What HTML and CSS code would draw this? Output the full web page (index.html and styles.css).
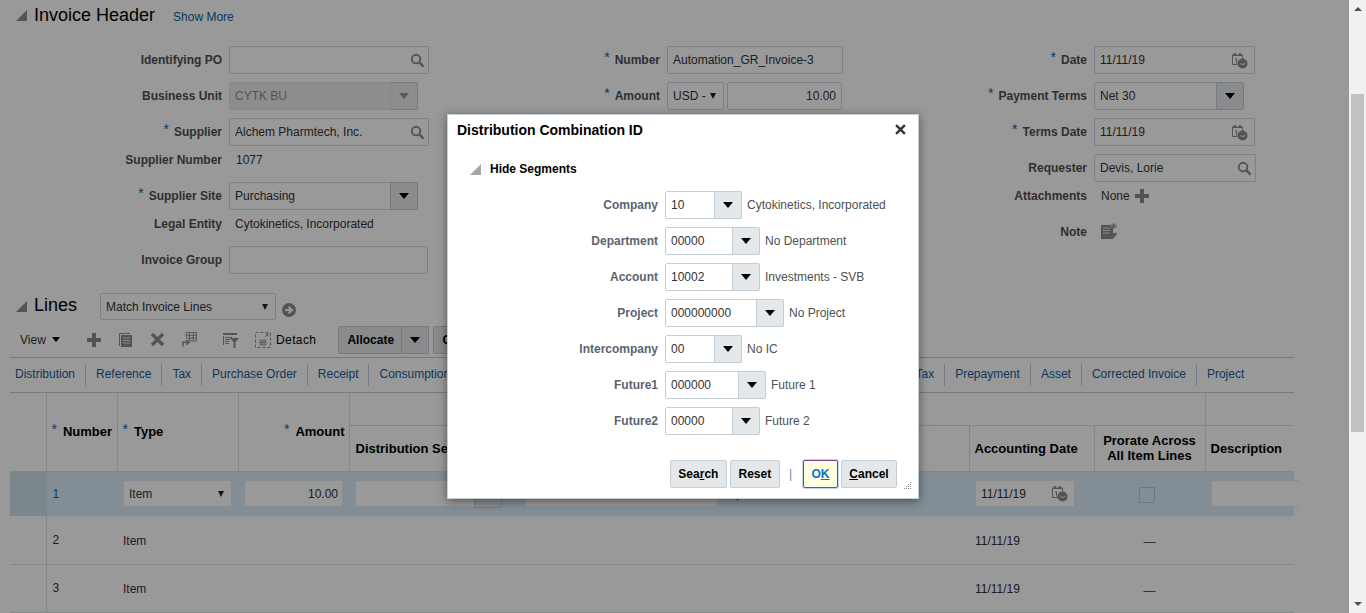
FILE: index.html
```html
<!DOCTYPE html>
<html lang="en">
<head>
    <meta charset="UTF-8">
    <title>Invoice Header</title>
    <link rel="stylesheet" href="styles.css">
</head>
<body>
    <svg class="defs" width="0" height="0">
        <symbol id="i-search" viewBox="0 0 16 16"><circle cx="6.5" cy="6.5" r="4.6" fill="none" stroke="currentColor" stroke-width="2"/><path d="M10 10l4.5 4.5" stroke="currentColor" stroke-width="2.6"/></symbol>
        <symbol id="i-cal" viewBox="0 0 17 17"><path d="M1.5 3.5h10v3M1.5 3.5v9h5" fill="none" stroke="currentColor" stroke-width="1"/><path d="M3 1h2v3H3zM8 1h2v3H8zM1 2.5h11V4H1zM4 6.500h2v5H5V7.500H4z" fill="currentColor"/><circle cx="11.500" cy="11.500" r="5" fill="currentColor"/><path d="M9.500 11.500l2 1 2.500-.8" fill="none" stroke="#fff" stroke-width="1"/></symbol>
        <symbol id="i-plus" viewBox="0 0 14 14"><path d="M5 0h4v5h5v4H9v5H5V9H0V5h5z" fill="currentColor"/></symbol>
    </svg>

    <main class="page">
        <div class="section-head">
            <span class="twisty"></span>
            <h2>Invoice Header</h2>
            <a class="link show-more">Show More</a>
        </div>

        <div class="form">
            <div class="col col-a">
                <div class="field"><span class="lbl">Identifying PO</span><div class="ctl w-200"><span></span><svg class="ico-search"><use href="#i-search"/></svg></div></div>
                <div class="field"><span class="lbl">Business Unit</span><div class="ctl w-189 disabled"><span>CYTK BU</span><b class="drop"><i class="arrow"></i></b></div></div>
                <div class="field"><span class="lbl"><em>*</em>Supplier</span><div class="ctl w-200"><span>Alchem Pharmtech, Inc.</span><svg class="ico-search"><use href="#i-search"/></svg></div></div>
                <div class="field text"><span class="lbl">Supplier Number</span><span class="val ind">1077</span></div>
                <div class="field"><span class="lbl"><em>*</em>Supplier Site</span><div class="ctl w-189"><span>Purchasing</span><b class="drop"><i class="arrow"></i></b></div></div>
                <div class="field text"><span class="lbl">Legal Entity</span><span class="val">Cytokinetics, Incorporated</span></div>
                <div class="field"><span class="lbl">Invoice Group</span><div class="ctl w-199"></div></div>
            </div>
            <div class="col col-b">
                <div class="field"><span class="lbl"><em>*</em>Number</span><div class="ctl w-176"><span>Automation_GR_Invoice-3</span></div></div>
                <div class="field"><span class="lbl"><em>*</em>Amount</span><div class="ctl w-57"><span>USD -</span><i class="arrow small"></i></div><div class="ctl w-115 right"><span>10.00</span></div></div>
            </div>
            <div class="col col-c">
                <div class="field"><span class="lbl"><em>*</em>Date</span><div class="ctl w-161"><span>11/11/19</span><svg class="ico-cal"><use href="#i-cal"/></svg></div></div>
                <div class="field"><span class="lbl"><em>*</em>Payment Terms</span><div class="ctl w-150"><span>Net 30</span><b class="drop"><i class="arrow"></i></b></div></div>
                <div class="field"><span class="lbl"><em>*</em>Terms Date</span><div class="ctl w-161"><span>11/11/19</span><svg class="ico-cal"><use href="#i-cal"/></svg></div></div>
                <div class="field"><span class="lbl">Requester</span><div class="ctl w-162"><span>Devis, Lorie</span><svg class="ico-search"><use href="#i-search"/></svg></div></div>
                <div class="field text"><span class="lbl">Attachments</span><span class="val ind">None</span><svg class="ico-add"><use href="#i-plus"/></svg></div>
                <div class="field note"><span class="lbl">Note</span>
                    <svg class="ico-note" viewBox="0 0 16 16"><path d="M0 2h10v3h2v5h4v1l-4 5H0z" fill="currentColor"/><path d="M2 5h7M2 7.500h7M2 10h7" stroke="#e4e4e4" stroke-width="1"/><path d="M12.500 0v6M10 3h6M10.500 1l4 4M14.500 1l-4 4" stroke="currentColor" stroke-width="1"/></svg>
                </div>
            </div>
        </div>

        <div class="lines-head">
            <span class="twisty"></span>
            <h2>Lines</h2>
            <div class="ctl match"><span>Match Invoice Lines</span><i class="arrow small"></i></div>
            <svg class="ico-go" viewBox="0 0 14 14"><circle cx="7" cy="7" r="7" fill="currentColor"/><path d="M3 7h6M6.500 3.800L10 7l-3.500 3.200" fill="none" stroke="#fff" stroke-width="2"/></svg>
        </div>

        <div class="toolbar">
            <span class="view">View</span><i class="arrow view-arrow"></i>
            <svg class="tool t-add"><use href="#i-plus"/></svg>
            <svg class="tool" viewBox="0 0 15 15"><path d="M1 1h11v1H2v12H1z" fill="currentColor"/><path d="M3 3h11v12H3z" fill="currentColor"/><path d="M5 6h7M5 8.500h7M5 11h7" stroke="#e4e4e4" stroke-width="1"/></svg>
            <svg class="tool" viewBox="0 0 15 15"><path d="M2 2l11 11M13 2L2 13" stroke="currentColor" stroke-width="3.400"/></svg>
            <svg class="tool" viewBox="0 0 16 16"><path d="M4.500 .500h11v9h-7M4.500 .500v5M4.500 3.500h11M4.500 6.500h11M8 .500v9M12 .500v9" fill="none" stroke="currentColor" stroke-width="1"/><path d="M1 15.500v-4.500h6M4.500 8.500L7.500 11l-3 2.500" fill="none" stroke="currentColor" stroke-width="1.600"/></svg>
            <svg class="tool t-filter" viewBox="0 0 16 16"><path d="M0 1h14v2H0zM0 4h1v9H0zM2 5h7v1H2zM2 7h5v1H2zM2 9h4v1H2zM2 11h4v1H2z" fill="currentColor"/><path d="M7 6h9l-3.500 4v6h-2v-6z" fill="currentColor"/></svg>
            <svg class="tool t-detach" viewBox="0 0 16 16"><rect x=".500" y=".500" width="15" height="15" fill="none" stroke="currentColor" stroke-dasharray="3 2"/><path d="M5 8h6v5H5zM5 10.500h6M7 8v5M9 8v5" fill="none" stroke="currentColor" stroke-width=".8"/><path d="M10 5l3-3M10.500 2H13v2.500" fill="none" stroke="currentColor"/></svg>
            <span class="detach">Detach</span>
            <div class="split"><span>Allocate</span><b><i class="arrow"></i></b></div>
            <div class="split next"><span>C</span></div>
        </div>

        <nav class="tabs">
            <a class="link">Distribution</a>
            <a class="link">Reference</a>
            <a class="link">Tax</a>
            <a class="link">Purchase Order</a>
            <a class="link">Receipt</a>
            <a class="link tab-wide">Consumption</a>
            <a class="link">Tax</a>
            <a class="link">Prepayment</a>
            <a class="link">Asset</a>
            <a class="link">Corrected Invoice</a>
            <a class="link">Project</a>
        </nav>

        <table class="grid">
            <colgroup>
                <col class="c-head"><col class="c-num"><col class="c-type"><col class="c-amt"><col class="c-set"><col class="c-combo"><col class="c-date"><col class="c-pro"><col class="c-desc">
            </colgroup>
            <thead>
                <tr class="top">
                    <th rowspan="2"></th>
                    <th rowspan="2"><em>*</em>Number</th>
                    <th rowspan="2"><em>*</em>Type</th>
                    <th rowspan="2" class="num"><em>*</em>Amount</th>
                    <th colspan="4"></th>
                    <th></th>
                </tr>
                <tr class="bottom">
                    <th>Distribution Set</th>
                    <th></th>
                    <th>Accounting Date</th>
                    <th class="mid">Prorate Across<br>All Item Lines</th>
                    <th>Description</th>
                </tr>
            </thead>
            <tbody>
                <tr class="sel">
                    <td></td>
                    <td class="no">1</td>
                    <td><div class="ctl cell w-109"><span>Item</span><i class="arrow small"></i></div></td>
                    <td><div class="ctl cell w-99 right"><span>10.00</span></div></td>
                    <td><div class="ctl cell w-147"><b class="drop"></b></div></td>
                    <td><div class="combo"><div class="ctl cell w-193"></div><svg class="ico-search"><use href="#i-search"/></svg></div></td>
                    <td><div class="ctl cell w-100"><span>11/11/19</span><svg class="ico-cal"><use href="#i-cal"/></svg></div></td>
                    <td class="mid"><span class="check"></span></td>
                    <td><div class="ctl cell w-fill"></div></td>
                </tr>
                <tr>
                    <td></td><td class="no">2</td><td>Item</td><td></td><td></td><td></td><td>11/11/19</td><td class="mid dash">&mdash;</td><td></td>
                </tr>
                <tr>
                    <td></td><td class="no">3</td><td>Item</td><td></td><td></td><td></td><td>11/11/19</td><td class="mid dash">&mdash;</td><td></td>
                </tr>
            </tbody>
        </table>

        <div class="overlay"></div>

        <div class="dialog">
            <div class="dialog-head">
                <h3>Distribution Combination ID</h3>
                <svg class="close" viewBox="0 0 10 10"><path d="M1 1l8 8M9 1l-8 8" stroke="currentColor" stroke-width="2.200"/></svg>
            </div>
            <div class="segments"><span class="twisty small"></span><strong>Hide Segments</strong></div>
            <div class="seg-list">
                <div class="seg"><label>Company</label><div class="ctl w-77"><span>10</span><b class="drop"><i class="arrow"></i></b></div><span class="val">Cytokinetics, Incorporated</span></div>
                <div class="seg"><label>Department</label><div class="ctl w-95"><span>00000</span><b class="drop"><i class="arrow"></i></b></div><span class="val">No Department</span></div>
                <div class="seg"><label>Account</label><div class="ctl w-95"><span>10002</span><b class="drop"><i class="arrow"></i></b></div><span class="val">Investments - SVB</span></div>
                <div class="seg"><label>Project</label><div class="ctl w-119"><span>000000000</span><b class="drop"><i class="arrow"></i></b></div><span class="val">No Project</span></div>
                <div class="seg"><label>Intercompany</label><div class="ctl w-77"><span>00</span><b class="drop"><i class="arrow"></i></b></div><span class="val">No IC</span></div>
                <div class="seg"><label>Future1</label><div class="ctl w-101"><span>000000</span><b class="drop"><i class="arrow"></i></b></div><span class="val">Future 1</span></div>
                <div class="seg"><label>Future2</label><div class="ctl w-95"><span>00000</span><b class="drop"><i class="arrow"></i></b></div><span class="val">Future 2</span></div>
            </div>
            <div class="dialog-foot">
                <button class="btn b-search">Sea<u>r</u>ch</button>
                <button class="btn b-reset">Reset</button>
                <span class="pipe">|</span>
                <button class="btn b-ok">O<u>K</u></button>
                <button class="btn b-cancel"><u>C</u>ancel</button>
            </div>
            <svg class="grip" viewBox="0 0 9 9"><path d="M7 0h1v1H7zM5 2h1v1H5zM7 2h1v1H7zM3 4h1v1H3zM5 4h1v1H5zM7 4h1v1H7zM1 6h1v1H1zM3 6h1v1H3zM5 6h1v1H5zM7 6h1v1H7z" fill="#8a8a8a"/></svg>
        </div>
    </main>

    <aside class="scrollbar">
        <i class="sb-up"></i>
        <div class="sb-track"><div class="sb-thumb"></div></div>
        <i class="sb-down"></i>
    </aside>
</body>
</html>
```

FILE: styles.css
```css
* { box-sizing: border-box; }
html, body { margin: 0; height: 613px; overflow: hidden; }
body { display: flex; font-family: "Liberation Sans", Arial, sans-serif; font-size: 12px; color: #333; background: #fff; }
.defs { position: absolute; }
.page { position: relative; width: 1349px; height: 613px; overflow: hidden; flex: none; }

h2 { margin: 0; font-size: 18px; font-weight: normal; color: #000; }
.link { color: #145c9e; }
em { font-style: normal; color: #145c9e; font-size: 14px; line-height: 0; font-weight: normal; vertical-align: 2px; margin-right: 6px; }

.twisty { width: 0; height: 0; border-style: solid; border-width: 0 0 11px 11px; border-color: transparent transparent #8c8c8c transparent; flex: none; }
.twisty.small { border-color: transparent transparent #a6a6a6 transparent; }

.section-head { display: flex; align-items: center; height: 30px; padding-left: 16px; }
.section-head h2 { margin-left: 7px; }
.show-more { margin: 3px 0 0 18px; }

/* header form */
.form { display: flex; margin-top: 16px; height: 228px; }
.col { flex: none; }
.col-a { width: 440px; --lbl: 222px; }
.col-b { width: 440px; --lbl: 220px; }
.col-c { width: 469px; --lbl: 207px; }
.field { display: flex; align-items: center; height: 28px; margin-bottom: 8px; }
.field.text { height: 20px; margin: -4px 0 12px; }
.lbl { width: var(--lbl); margin-right: 7px; text-align: right; font-weight: bold; color: #4f4f4f; flex: none; white-space: nowrap; }
.lbl em { margin-right: 5px; }
.val { padding-left: 6px; color: #333; white-space: nowrap; }
.val.ind { padding-left: 7px; }

.ctl { position: relative; display: flex; align-items: center; height: 28px; padding-left: 5px; background: #fff; border: 1px solid #c4ced7; border-radius: 2px; flex: none; color: #333; }
.form .ctl, .match { border-color: #d0d8de; }
.ctl > span { flex: 1; white-space: nowrap; }
.ctl.right { padding-right: 5px; text-align: right; }
.ctl.disabled { background: #ececec; color: #8a8a8a; border-color: #e0e0e0; }
.ctl.disabled .drop { background: #ececec; border-left-color: #dcdcdc; }
.ctl.disabled .arrow { border-top-color: #999; }
.drop { display: flex; align-items: center; justify-content: center; width: 28px; height: 28px; margin: -1px -1px -1px 0; background: #e4e8ea; border: 1px solid #c4ced7; border-radius: 0 2px 2px 0; flex: none; }
.arrow { display: block; width: 0; height: 0; border-style: solid; border-width: 6px 5px 0 5px; border-color: #000 transparent transparent transparent; flex: none; }
.arrow.small { border-width: 6px 3.500px 0 3.500px; margin-right: 7px; border-top-color: #222; }

.w-57 { width: 57px; margin-right: 3px; }
.w-115 { width: 115px; }
.w-150 { width: 150px; }
.w-161 { width: 161px; }
.w-162 { width: 162px; }
.w-176 { width: 176px; }
.w-189 { width: 189px; }
.w-199 { width: 199px; }
.w-200 { width: 200px; }
.w-77 { width: 77px; }
.w-95 { width: 95px; }
.w-101 { width: 101px; }
.w-119 { width: 119px; }
.w-109 { width: 109px; }
.w-99 { width: 99px; }
.w-147 { width: 147px; }
.w-193 { width: 193px; }
.w-100 { width: 100px; }
.w-fill { width: 89px; border-right: 0; }

.ico-search { width: 15px; height: 15px; margin-right: 3px; color: #8c8c8c; flex: none; }
.ico-cal { width: 17px; height: 17px; margin-right: 6px; color: #8c8c8c; flex: none; }
.ico-add { width: 14px; height: 14px; margin-left: 5px; color: #8c8c8c; }
.ico-note { width: 16px; height: 16px; margin: 0 0 2px 7px; color: #8c8c8c; }

/* lines */
.lines-head { display: flex; align-items: center; height: 27px; margin-top: 19px; padding-left: 16px; }
.lines-head h2 { width: 66px; margin: 0 0 2px 7px; }
.match { width: 176px; height: 27px; }
.ico-go { width: 14px; height: 14px; margin: 7px 0 0 6px; color: #8c8c8c; }

.toolbar { display: flex; align-items: center; height: 32px; margin: 6px 0 0 10px; padding: 0 0 4px 10px; border-bottom: 1px solid #c4ced7; width: 1284px; }
.view { width: 32px; color: #333; }
.view-arrow { border-width: 5px 4.500px 0 4.500px; }
.tool { width: 15px; height: 15px; margin-left: 17px; color: #8c8c8c; flex: none; }
.t-add { width: 14px; height: 14px; margin-left: 27px; }
.t-filter { width: 16px; height: 16px; margin-left: 26px; }
.t-detach { width: 16px; height: 16px; margin-left: 16px; }
.detach { margin-left: 5px; color: #000; letter-spacing: .4px; }
.split { display: flex; align-items: center; height: 28px; margin-left: 22px; background: #e4e8ea; border: 1px solid #c4ced7; border-radius: 2px; font-weight: bold; color: #000; }
.split span { width: 62px; padding-left: 8px; }
.split b { display: flex; align-items: center; justify-content: center; width: 27px; height: 26px; border-left: 1px solid #c4ced7; }
.split.next { margin-left: 4px; width: 60px; }

.tabs { display: flex; align-items: center; height: 35px; margin-left: 10px; width: 1284px; border-bottom: 1px solid #c4ced7; }
.tabs a { height: 22px; line-height: 20px; padding: 0 10px; border-right: 1px solid #c4ced7; white-space: nowrap; }
.tabs a:first-child { padding-left: 5px; }
.tabs a:last-child { border-right: 0; }
.tabs .tab-wide { width: 536px; }

/* table */
.grid { width: 1284px; margin-left: 10px; border-collapse: collapse; table-layout: fixed; }
.c-head { width: 36px; }
.c-num { width: 71px; }
.c-type { width: 121px; }
.c-amt { width: 111px; }
.c-set { width: 170px; }
.c-combo { width: 450px; }
.c-date { width: 125px; }
.c-pro { width: 111px; }
.c-desc { width: 89px; }
.grid th { padding: 0 5px; font-size: 13px; color: #000; text-align: left; border: 1px solid #d6dfe6; border-top: 0; white-space: nowrap; }
.grid th:first-child { border-left: 0; }
.grid th:last-child, .grid td:last-child { border-right: 0; }
.grid th.num { padding-right: 4px; text-align: right; }
.grid th.mid { text-align: center; line-height: 15px; }
.grid .top { height: 32px; }
.grid .bottom { height: 46px; }
.grid .bottom th:first-child { padding-left: 6px; }
.grid td { height: 48px; padding: 2px 6px 0; border-bottom: 1px solid #e0e4e7; vertical-align: middle; }
.grid td:first-child { border-right: 1px solid #d6dfe6; }
.grid td.no { padding: 0 6px; }
.grid td.mid { text-align: center; }
.grid td.dash { padding: 5px 0 0; color: #555; }
.grid .sel td { height: 45px; background: #d9ecf8; border-bottom: 0; padding: 0 6px; }
.grid .sel td:first-child { background: #cfdfeb; }
.grid .sel .no { color: #145c9e; }
.cell { height: 27px; border-color: #e4ebf0; }
.cell.right { padding-right: 4px; }
.combo { display: flex; align-items: center; gap: 7px; }
.combo .ico-search { color: #145c9e; }
.cell .drop { margin-left: auto; }
.check { display: inline-block; width: 16px; height: 16px; margin: 3px 5px 0 0; background: #d9ecf8; border: 1px solid #b9c6cf; border-radius: 1px; vertical-align: middle; }

.overlay { position: absolute; inset: 0; background: rgba(0, 0, 0, .4); }

/* dialog */
.dialog { position: absolute; left: 447px; top: 114px; width: 472px; height: 385px; background: #fff; border: 1px solid #c4ced7; box-shadow: 0 2px 9px rgba(0, 0, 0, .45); }
.dialog-head { display: flex; align-items: center; justify-content: space-between; height: 29px; padding: 0 12px 0 9px; }
.dialog-head h3 { margin: 0; font-size: 14px; color: #000; }
.close { width: 11px; height: 11px; color: #333; }
.segments { display: flex; align-items: center; height: 22px; margin-top: 14px; padding-left: 22px; }
.segments strong { margin-left: 9px; color: #000; }
.seg-list { margin-top: 11px; }
.seg { display: flex; align-items: center; height: 28px; margin-bottom: 8px; }
.seg label { width: 210px; margin-right: 7px; text-align: right; font-weight: bold; color: #5a6470; flex: none; }
.seg .val { padding-left: 5px; color: #4f4f4f; }
.dialog-foot { display: flex; align-items: center; justify-content: flex-end; margin-top: 25px; padding-right: 21px; }
.btn { height: 28px; padding: 0; font: bold 12px "Liberation Sans", Arial, sans-serif; color: #000; background: #e4e8ea; border: 1px solid #c4ced7; border-radius: 2px; }
.b-search { width: 57px; margin-right: 3px; }
.b-reset { width: 50px; }
.pipe { margin: 0 11px 0 9px; color: #5b8db8; }
.b-ok { width: 35px; margin-right: 3px; color: #0572ce; background: #ffffe0; border: 1px solid #8a3f8a; box-shadow: 0 0 0 1px #bcd4ee; }
.b-cancel { width: 56px; }
.grip { position: absolute; right: 6px; bottom: 7px; width: 9px; height: 9px; }

/* window scrollbar */
.scrollbar { display: flex; flex-direction: column; align-items: center; width: 17px; height: 613px; background: #f1f1f1; flex: none; }
.sb-track { flex: 1; width: 100%; padding-top: 77px; }
.sb-thumb { width: 13px; height: 338px; margin: 0 auto; background: #c1c1c1; }
.sb-up { width: 0; height: 0; margin: 7px 0 6px; border-style: solid; border-width: 0 4px 4px 4px; border-color: transparent transparent #505050 transparent; }
.sb-down { width: 0; height: 0; margin: 6px 0 7px; border-style: solid; border-width: 4px 4px 0 4px; border-color: #505050 transparent transparent transparent; }
```
